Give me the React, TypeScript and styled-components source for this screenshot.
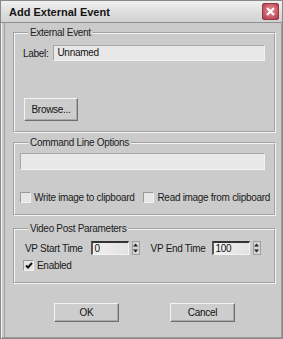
import React from 'react';
import styled, { createGlobalStyle } from 'styled-components';

// ============================================
// BASE
// ============================================

const GlobalStyle = createGlobalStyle`
  html, body {
    margin: 0;
    padding: 0;
    background: #cbcbcb;
  }
  * { box-sizing: border-box; }
`;

const Window = styled.div`
  width: 283px;
  height: 339px;
  display: flex;
  flex-direction: column;
  background: #cbcbcb;
  border: 1px solid #8a8a8a;
  box-shadow: inset 1px 1px 0 #f2f2f2, inset -1px -1px 0 #9a9a9a, inset 3px 0 0 #cbcbcb, inset 4px 0 0 #a0a0a0;
  font-family: "Liberation Sans", Arial, sans-serif;
  font-size: 10px;
  letter-spacing: -0.3px;
  color: #111;
  overflow: hidden;
`;

const TitleBar = styled.div`
  height: 22px;
  flex: none;
  display: flex;
  align-items: center;
  justify-content: space-between;
  padding: 0 3px 0 8px;
  background: linear-gradient(#f1f1f1, #dedede 55%, #d2d2d2);
  border-bottom: 1px solid #8f8f8f;
`;

const Title = styled.span`
  font-weight: bold;
  font-size: 11px;
  letter-spacing: 0;
  color: #141414;
`;

const CloseBox = styled.div`
  width: 17px;
  height: 17px;
  border-radius: 2px;
  background: radial-gradient(circle at 50% 45%, #e89aa0, #c4515c 70%, #a8394a);
  border: 1px solid #8e3a44;
  display: flex;
  align-items: center;
  justify-content: center;
`;

const Body = styled.div`
  flex: 1;
  display: flex;
  flex-direction: column;
  padding: 3px 6px 0 12px;
`;

// ============================================
// GROUPS
// ============================================

const Group = styled.fieldset<{ $h: number; $mt?: number }>`
  margin: ${p => p.$mt ?? 0}px 0 0 0;
  min-width: 0;
  height: ${p => p.$h}px;
  padding: 0 9px 0 8px;
  border: 2px groove #f4f4f4;
  border-radius: 0;
  display: flex;
  flex-direction: column;
`;

const Legend = styled.legend`
  padding: 0 2px;
  margin-left: 5px;
  font-size: 10px;
  line-height: 13px;
  color: #222;
`;

const Row = styled.div<{ $mt?: number; $gap?: number; $ml?: number }>`
  display: flex;
  align-items: center;
  gap: ${p => p.$gap ?? 4}px;
  margin-top: ${p => p.$mt ?? 0}px;
  margin-left: ${p => p.$ml ?? 0}px;
`;

const Label = styled.span<{ $ml?: number; $mr?: number }>`
  white-space: nowrap;
  color: #1a1a1a;
  margin-left: ${p => p.$ml ?? 0}px;
  margin-right: ${p => p.$mr ?? 0}px;
`;

const TextInput = styled.div<{ $h?: number }>`
  height: ${p => p.$h ?? 16}px;
  flex: 1;
  min-width: 0;
  background: #e8e8e8;
  border-top: 1px solid #a8a8a8;
  border-left: 1px solid #a8a8a8;
  border-bottom: 1px solid #f3f3f3;
  border-right: 1px solid #f3f3f3;
  padding: 0 3px;
  line-height: 14px;
  color: #111;
`;

const Button = styled.div<{ $w: number; $h: number }>`
  width: ${p => p.$w}px;
  height: ${p => p.$h}px;
  display: flex;
  align-items: center;
  justify-content: center;
  background: #cdcdcd;
  border-top: 1px solid #f4f4f4;
  border-left: 1px solid #f4f4f4;
  border-right: 1px solid #6f6f6f;
  border-bottom: 1px solid #6f6f6f;
  box-shadow: inset -1px -1px 0 #a9a9a9;
  color: #111;
`;

const Check = styled.div`
  width: 11px;
  height: 11px;
  flex: none;
  background: #e6e6e6;
  border-top: 1px solid #9a9a9a;
  border-left: 1px solid #9a9a9a;
  border-bottom: 1px solid #f2f2f2;
  border-right: 1px solid #f2f2f2;
  display: flex;
  align-items: center;
  justify-content: center;
`;

const SpinField = styled.div`
  display: flex;
  align-items: center;
  gap: 3px;
`;

const SpinEdit = styled.div`
  width: 38px;
  height: 14px;
  background: linear-gradient(90deg, #f0f0f0, #e2e2e2);
  border-top: 2px solid #333;
  border-left: 2px solid #555;
  border-bottom: 1px solid #f4f4f4;
  border-right: 1px solid #f4f4f4;
  padding: 0 2px;
  line-height: 11px;
  color: #111;
`;

const Spin = styled.div`
  width: 8px;
  height: 14px;
  background: #d4d4d4;
  border: 1px solid #a0a0a0;
  display: flex;
  align-items: center;
  justify-content: center;
`;

const Buttons = styled.div`
  display: flex;
  gap: 51px;
  margin: 19px 0 0 41px;
`;

// ============================================
// PIECES
// ============================================

const CheckItem = ({ label, checked = false }: { label: string; checked?: boolean }) => (
  <Row $gap={3}>
    <Check>
      {checked && (
        <svg width="8" height="7" viewBox="0 0 8 7">
          <path d="M1 3.5 L3 5.5 L7 1" stroke="#111" strokeWidth="2" fill="none" />
        </svg>
      )}
    </Check>
    <Label>{label}</Label>
  </Row>
);

const Spinner = ({ value }: { value: string }) => (
  <SpinField>
    <SpinEdit>{value}</SpinEdit>
    <Spin>
      <svg width="5" height="10" viewBox="0 0 5 10">
        <path d="M2.5 0.5 L5 3.5 L0 3.5 Z M0 6.5 L5 6.5 L2.5 9.5 Z" fill="#222" />
      </svg>
    </Spin>
  </SpinField>
);

export default function App() {
  return (
    <>
      <GlobalStyle />
      <Window>
        <TitleBar>
          <Title>Add External Event</Title>
          <CloseBox>
            <svg width="9" height="9" viewBox="0 0 9 9">
              <path d="M1 1 L8 8 M8 1 L1 8" stroke="#fff" strokeWidth="2" />
            </svg>
          </CloseBox>
        </TitleBar>
        <Body>
          <Group $h={107}>
            <Legend>External Event</Legend>
            <Row $mt={6} $gap={5}>
              <Label>Label:</Label>
              <TextInput>Unnamed</TextInput>
            </Row>
            <Row $mt={37} $ml={1}>
              <Button $w={54} $h={23}>Browse...</Button>
            </Row>
          </Group>
          <Group $h={80} $mt={3}>
            <Legend>Command Line Options</Legend>
            <Row $mt={4} $ml={-3}>
              <TextInput $h={17} />
            </Row>
            <Row $mt={22} $gap={9} $ml={-3}>
              <CheckItem label="Write image to clipboard" />
              <CheckItem label="Read image from clipboard" />
            </Row>
          </Group>
          <Group $h={62} $mt={6}>
            <Legend>Video Post Parameters</Legend>
            <Row $mt={6} $gap={0} $ml={2}>
              <Label $mr={8}>VP Start Time</Label>
              <Spinner value="0" />
              <Label $ml={11} $mr={6}>VP End Time</Label>
              <Spinner value="100" />
            </Row>
            <Row $mt={5}>
              <CheckItem label="Enabled" checked />
            </Row>
          </Group>
          <Buttons>
            <Button $w={65} $h={19}>OK</Button>
            <Button $w={65} $h={19}>Cancel</Button>
          </Buttons>
        </Body>
      </Window>
    </>
  );
}
